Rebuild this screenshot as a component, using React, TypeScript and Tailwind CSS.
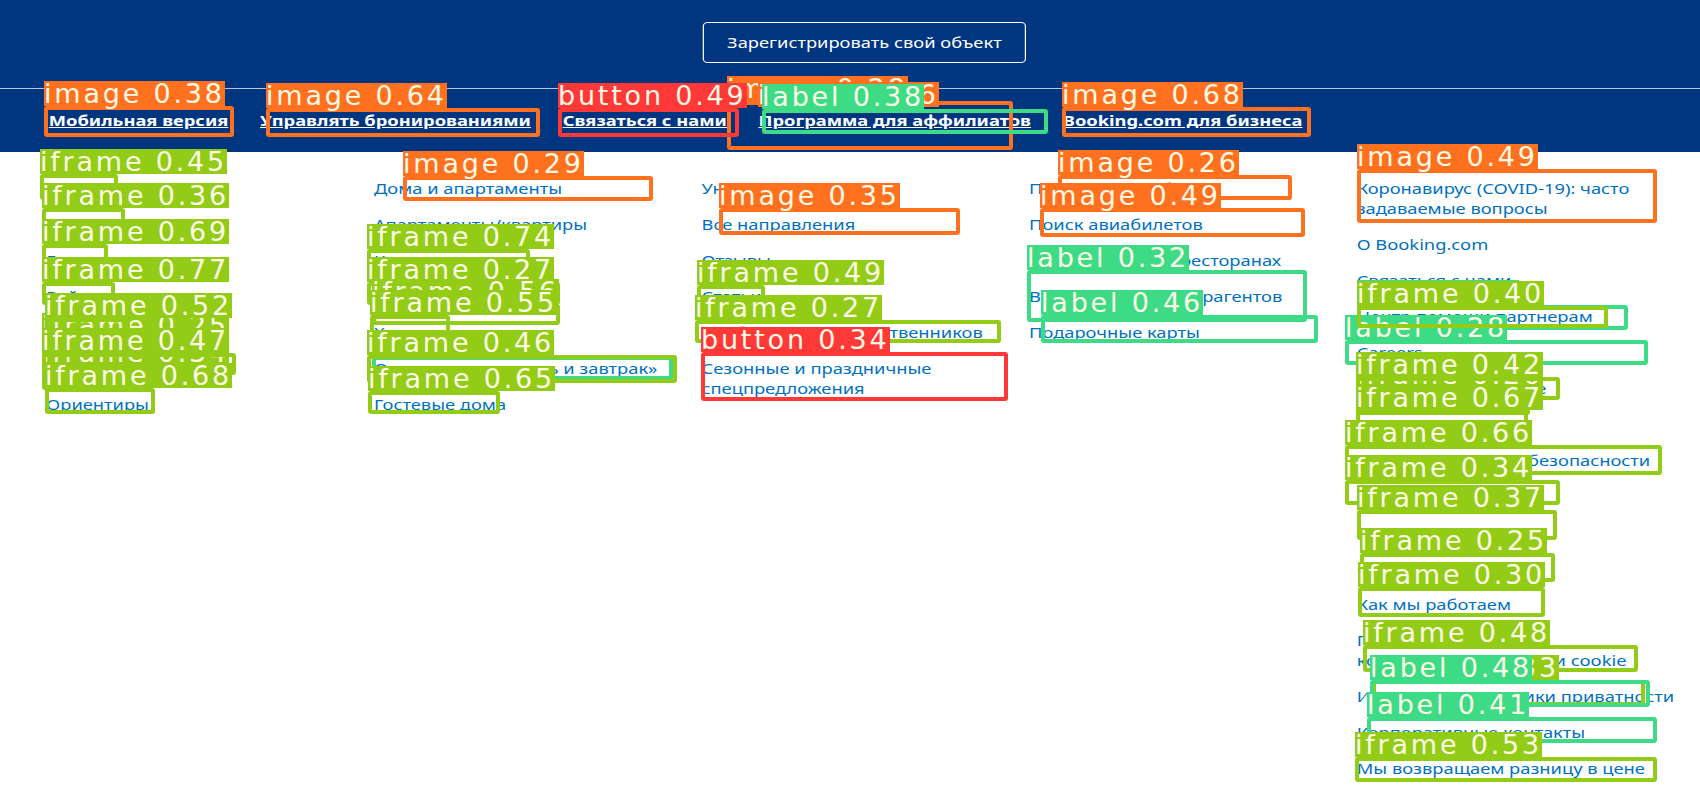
import React from "react";

type Det = { c: "o" | "r" | "g" | "t"; t: string; b?: [number, number, number, number]; l?: [number, number] };

const BORDER: Record<string, string> = {
  o: "border-[#FF701F]",
  r: "border-[#FF3838]",
  g: "border-[#92CC17]",
  t: "border-[#3DDB86]",
};
const BG: Record<string, string> = {
  o: "bg-[#FF701F]",
  r: "bg-[#FF3838]",
  g: "bg-[#92CC17]",
  t: "bg-[#3DDB86]",
};

const DETS: Det[] = [
  // header
  { c: "o", t: "image 0.38", b: [44, 106, 234, 137] },
  { c: "o", t: "image 0.64", b: [266, 108, 540, 137] },
  { c: "o", t: "image 0.28", b: [727, 101, 1013, 150] },
  { c: "r", t: "button 0.49", b: [558, 108, 739, 137] },
  { c: "o", t: "image 0.86", l: [758, 82] },
  { c: "t", t: "label 0.38", b: [762, 109, 1048, 134] },
  { c: "o", t: "image 0.68", b: [1062, 107, 1311, 137] },
  // col1
  { c: "g", t: "iframe 0.45", b: [40, 174, 118, 200] },
  { c: "g", t: "iframe 0.36", b: [42, 208, 125, 235] },
  { c: "g", t: "iframe 0.69", b: [42, 244, 108, 268] },
  { c: "g", t: "iframe 0.77", b: [42, 282, 115, 305] },
  { c: "g", t: "iframe 0.25", b: [42, 338, 130, 360] },
  { c: "g", t: "iframe 0.52", b: [45, 318, 130, 345] },
  { c: "g", t: "iframe 0.34", b: [42, 365, 140, 390] },
  { c: "g", t: "iframe 0.47", b: [42, 353, 236, 375] },
  { c: "g", t: "iframe 0.68", b: [45, 388, 155, 414] },
  // col2
  { c: "o", t: "image 0.29", b: [403, 176, 653, 201] },
  { c: "t", t: "label 0.31", b: [372, 356, 673, 380] },
  { c: "g", t: "iframe 0.74", b: [367, 249, 530, 275] },
  { c: "g", t: "iframe 0.27", b: [367, 282, 560, 305] },
  { c: "g", t: "iframe 0.56", b: [372, 304, 560, 325] },
  { c: "g", t: "iframe 0.55", b: [370, 315, 450, 340] },
  { c: "g", t: "iframe 0.46", b: [367, 355, 677, 383] },
  { c: "g", t: "iframe 0.65", b: [368, 391, 500, 414] },
  // col3
  { c: "o", t: "image 0.35", b: [719, 208, 960, 235] },
  { c: "g", t: "iframe 0.49", b: [697, 285, 765, 305] },
  { c: "g", t: "iframe 0.27", b: [695, 320, 1001, 343] },
  { c: "r", t: "button 0.34", b: [701, 352, 1008, 401] },
  // col4
  { c: "o", t: "image 0.26", b: [1058, 175, 1292, 200] },
  { c: "o", t: "image 0.49", b: [1040, 208, 1305, 237] },
  { c: "t", t: "label 0.32", b: [1027, 270, 1307, 322] },
  { c: "t", t: "label 0.46", b: [1041, 315, 1318, 343] },
  // col5
  { c: "o", t: "image 0.49", b: [1357, 169, 1657, 223] },
  { c: "t", t: "label 0.29", b: [1357, 305, 1628, 330] },
  { c: "t", t: "label 0.28", b: [1345, 340, 1648, 365] },
  { c: "g", t: "iframe 0.40", b: [1357, 306, 1608, 328] },
  { c: "g", t: "iframe 0.26", b: [1356, 387, 1530, 415] },
  { c: "g", t: "iframe 0.42", b: [1356, 377, 1560, 400] },
  { c: "g", t: "iframe 0.67", b: [1356, 410, 1528, 440] },
  { c: "g", t: "iframe 0.66", b: [1345, 445, 1662, 475] },
  { c: "g", t: "iframe 0.34", b: [1345, 480, 1560, 505] },
  { c: "g", t: "iframe 0.37", b: [1357, 510, 1557, 540] },
  { c: "g", t: "iframe 0.25", b: [1360, 553, 1555, 582] },
  { c: "g", t: "iframe 0.30", b: [1358, 587, 1545, 617] },
  { c: "g", t: "iframe 0.48", b: [1363, 645, 1638, 672] },
  { c: "g", t: "iframe 0.33", b: [1372, 680, 1645, 706] },
  { c: "t", t: "label 0.48", b: [1370, 680, 1650, 707] },
  { c: "t", t: "label 0.41", b: [1367, 717, 1657, 743] },
  { c: "g", t: "iframe 0.53", b: [1355, 757, 1657, 782] },
];

const COLS: string[][] = [
  ["Страны", "Регионы", "Города", "Районы", "Аэропорты", "Отели", "Ориентиры"],
  [
    "Дома и апартаменты",
    "Апартаменты/квартиры",
    "Курортные отели",
    "Виллы",
    "Хостелы",
    "Отели типа «постель и завтрак»",
    "Гостевые дома",
  ],
  [
    "Уникальные места",
    "Все направления",
    "Отзывы",
    "Статьи",
    "Сообщества путешественников",
    "Сезонные и праздничные|спецпредложения",
  ],
  [
    "Прокат автомобилей",
    "Поиск авиабилетов",
    "Бронирование в ресторанах",
    "Booking.com для турагентов",
    "Подарочные карты",
  ],
  [
    "Коронавирус (COVID-19): часто|задаваемые вопросы",
    "О Booking.com",
    "Связаться с нами",
    "Центр помощи партнерам",
    "Careers",
    "Устойчивое развитие",
    "Пресс-центр",
    "Центр ресурсов по безопасности",
    "Для инвесторов",
    "Условия",
    "Споры",
    "Как мы работаем",
    "Положение о|конфиденциальности и cookie",
    "Исполнение политики приватности",
    "Корпоративные контакты",
    "Мы возвращаем разницу в цене",
  ],
];

const HEADER_LINKS = [
  "Мобильная версия",
  "Управлять бронированиями",
  "Связаться с нами",
  "Программа для аффилиатов",
  "Booking.com для бизнеса",
];

function Detection({ d }: { d: Det }) {
  const lx = d.l ? d.l[0] : d.b ? d.b[0] : 0;
  const ly = d.l ? d.l[1] : d.b ? d.b[1] - 25 : 0;
  return (
    <>
      {d.b && (
        <div
          className={`absolute border-4 rounded-[3px] ${BORDER[d.c]}`}
          style={{ left: d.b[0], top: d.b[1], width: d.b[2] - d.b[0], height: d.b[3] - d.b[1] }}
        />
      )}
      <div
        className={`absolute h-[25px] overflow-visible whitespace-nowrap font-['DejaVu_Sans',sans-serif] text-[27px] leading-[26px] tracking-[2.8px] text-[#fdfbe6] ${BG[d.c]}`}
        style={{ left: lx, top: ly }}
      >
        {d.t}
      </div>
    </>
  );
}

export default function App() {
  return (
    <div className="relative w-[1700px] h-[811px] overflow-hidden bg-white font-['Noto_Sans',sans-serif]">
      <div className="w-[1394px] origin-top-left scale-x-[1.22]">
        <header className="bg-[#003580] pt-[22px] pb-[22px]">
          <div className="pl-[576px]">
            <div className="w-[265px] h-[41px] flex items-center justify-center border border-white rounded-[4px] text-white text-[15px]">
              Зарегистрировать свой объект
            </div>
          </div>
          <div className="mt-[25px] h-px bg-[#b8c3dc]" />
          <nav className="pt-[21px] pl-[40px] flex gap-[26px]">
            {HEADER_LINKS.map((t) => (
              <span key={t} className="text-white text-[15px] leading-5 font-bold underline whitespace-nowrap">
                {t}
              </span>
            ))}
          </nav>
        </header>
        <footer className="pt-[26px] pl-[38px] grid grid-cols-[repeat(5,268.5px)]">
          {COLS.map((col, i) => (
            <div key={i} className="flex flex-col gap-4">
              {col.map((t) => (
                <span key={t} className="text-[#0071c2] text-[15px] leading-5 whitespace-nowrap">
                  {t.split("|").map((p, k) => (
                    <React.Fragment key={k}>
                      {k > 0 && <br />}
                      {p}
                    </React.Fragment>
                  ))}
                </span>
              ))}
            </div>
          ))}
        </footer>
      </div>
      <div className="absolute inset-0 pointer-events-none">
        {DETS.map((d, i) => (
          <Detection key={i} d={d} />
        ))}
      </div>
    </div>
  );
}
